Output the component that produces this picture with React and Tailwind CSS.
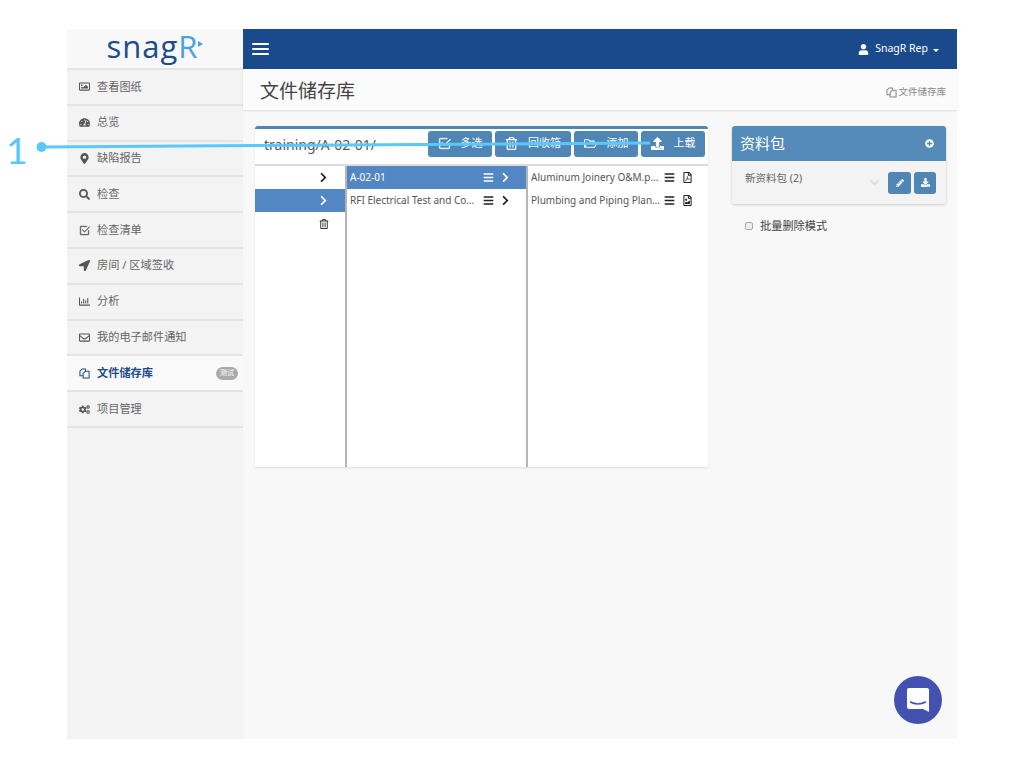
import {
  FaRegImage, FaTachometerAlt, FaMapMarkerAlt, FaSearch, FaLocationArrow,
  FaRegChartBar, FaRegEnvelope, FaCogs, FaBars, FaUser, FaChevronRight, FaRegTrashAlt,
  FaRegFolderOpen, FaUpload, FaPlusCircle, FaPencilAlt, FaDownload, FaRegFilePdf, FaRegFileImage, FaChevronDown,
} from "react-icons/fa";
import { BsCheck2Square } from "react-icons/bs";

const font = { fontFamily: '"Noto Sans", "Noto Sans CJK SC", sans-serif' };

function FilesIcon({ className }) {
  return (
    <svg viewBox="0 0 12 12" width="11" height="11" fill="none" stroke="currentColor" strokeWidth="1.100" className={className}>
      <path d="M4.500 8.500H1V3.500L3.500 1H7v2.500" />
      <path d="M4.500 11V6L7 3.500h4V11z" />
    </svg>
  );
}

function CheckIcon({ className }) {
  return <BsCheck2Square className={`stroke-current stroke-[0.6] ${className}`} />;
}

const navItems = [
  { label: "查看图纸", icon: FaRegImage },
  { label: "总览", icon: FaTachometerAlt },
  { label: "缺陷报告", icon: FaMapMarkerAlt },
  { label: "检查", icon: FaSearch },
  { label: "检查清单", icon: CheckIcon },
  { label: "房间 / 区域签收", icon: FaLocationArrow },
  { label: "分析", icon: FaRegChartBar },
  { label: "我的电子邮件通知", icon: FaRegEnvelope },
  { label: "文件储存库", icon: FilesIcon, active: true },
  { label: "项目管理", icon: FaCogs },
];

const toolbar = [
  { label: "多选", icon: CheckIcon, w: "w-[64px]" },
  { label: "回收箱", icon: FaRegTrashAlt, w: "w-[76px]" },
  { label: "添加", icon: FaRegFolderOpen, w: "w-[64px]" },
  { label: "上载", icon: FaUpload, w: "w-[64px]" },
];

function Sidebar() {
  return (
    <div className="w-[176px] shrink-0 bg-[#f3f3f3] flex flex-col">
      <div className="h-[41px] bg-[#f8f8f8] border-b-2 border-[#e4e4e4] flex items-center justify-center">
        <span className="text-[31px] leading-none tracking-[1px] text-[#1c4b8c] -mt-[5px]" style={{ fontFamily: '"Open Sans", sans-serif' }}>
          snag<span className="text-[#4aa3df]">R</span>
        </span>
        <svg width="5" height="6" viewBox="0 0 5 6" className="-mt-[10px]"><path d="M0 0l5 3-5 3z" fill="#4aa3df" /></svg>
      </div>
      {navItems.map((item) => {
        const Icon = item.icon;
        return (
          <div
            key={item.label}
            className={`h-[35.8px] border-b-2 border-[#e4e4e4] flex items-center pl-[12px] pr-[5px] text-[11.2px] ${item.active ? "bg-[#f9f9f9] text-[#1c4b8c] font-semibold" : "text-[#666]"}`}
          >
            <span className="w-[18px] flex justify-start"><Icon className={`text-[11px] ${item.active ? "text-[#1c4b8c]" : "text-[#555]"}`} /></span>
            <span>{item.label}</span>
            {item.active && (
              <span className="ml-auto h-[13px] w-[22px] rounded-full bg-[#aaa] text-white text-[7px] font-normal flex items-center justify-center">测试</span>
            )}
          </div>
        );
      })}
    </div>
  );
}

function Toolbar() {
  return (
    <div className="h-[37px] border-b-2 border-[#dcdcdc] flex items-center justify-between pl-[9px] pr-[3px]">
      <span className="text-[14px] text-[#555] -mt-[4px]">training/A-02-01/</span>
      <div className="flex gap-[3px] -mt-[6px]">
        {toolbar.map((b) => {
          const Icon = b.icon;
          return (
            <button key={b.label} className={`${b.w} h-[26px] rounded-[3px] bg-[#4f86b5] text-white text-[11px] flex items-center justify-center gap-[10px]`}>
              <Icon className="text-[13px]" />
              {b.label}
            </button>
          );
        })}
      </div>
    </div>
  );
}

function Row({ name, selected, chevron, fileIcon: FileIcon }) {
  return (
    <div className={`h-[23px] flex items-center pl-[3px] pr-[8px] text-[10px] ${selected ? "bg-[#5387c4] text-white" : "text-[#555]"}`}>
      <span className="flex-1 truncate">{name}</span>
      <FaBars className={`text-[11px] ml-[4px] ${selected ? "text-white" : "text-[#222]"}`} />
      {chevron && <FaChevronRight className={`text-[11px] ml-[6px] mr-[7px] ${selected ? "text-white" : "text-[#222]"}`} />}
      {FileIcon && <FileIcon className="text-[11px] ml-[7px] mr-[7px] text-[#222]" />}
    </div>
  );
}

function FileBrowser() {
  return (
    <div className="w-[453px] h-[341px] bg-white border-t-[3px] border-[#4f86b5] rounded-t-[3px] shadow-[0_1px_2px_rgba(0,0,0,0.1)] flex flex-col">
      <Toolbar />
      <div className="flex-1 flex">
        <div className="w-[90px] shrink-0">
          <div className="h-[23px] flex items-center justify-end pr-[16px]"><FaChevronRight className="text-[11px] text-[#222]" /></div>
          <div className="h-[23px] bg-[#5387c4] flex items-center justify-end pr-[16px]"><FaChevronRight className="text-[11px] text-white" /></div>
          <div className="h-[23px] flex items-center justify-end pr-[16px]"><FaRegTrashAlt className="text-[10px] text-[#333]" /></div>
        </div>
        <div className="w-[183px] shrink-0 border-x-2 border-[#b5b5b5]">
          <Row name="A-02-01" selected chevron />
          <Row name="RFI Electrical Test and Commissioning" chevron />
        </div>
        <div className="flex-1 min-w-0">
          <Row name="Aluminum Joinery O&M.pdf" fileIcon={FaRegFilePdf} />
          <Row name="Plumbing and Piping Plan.png" fileIcon={FaRegFileImage} />
        </div>
      </div>
    </div>
  );
}

function Packages() {
  return (
    <div className="w-[214px] ml-[24px]">
      <div className="h-[78px] rounded-[3px] shadow-[0_1px_3px_rgba(0,0,0,0.18)] overflow-hidden">
        <div className="h-[35px] bg-[#548bb9] text-white flex items-center justify-between pl-[8px] pr-[12px]">
          <span className="text-[15px]">资料包</span>
          <FaPlusCircle className="text-[9px]" />
        </div>
        <div className="h-[43px] bg-[#f3f3f3] flex items-center pl-[13px] pr-[10px] text-[10.5px] text-[#666]">
          <span className="flex-1 -mt-[8px]">新资料包 (2)</span>
          <FaChevronDown className="text-[11px] text-[#ddd] mr-[8px]" />
          <button className="w-[23px] h-[22px] rounded-[3px] bg-[#4f86b5] text-white flex items-center justify-center"><FaPencilAlt className="text-[8px]" /></button>
          <button className="w-[22px] h-[22px] ml-[3px] rounded-[3px] bg-[#4f86b5] text-white flex items-center justify-center"><FaDownload className="text-[9px]" /></button>
        </div>
      </div>
      <label className="flex items-center mt-[14px] pl-[13px] text-[11.2px] text-[#444]">
        <span className="w-[8px] h-[8px] rounded-[2px] border border-[#aaa] bg-[#eee] mr-[7px]" />
        批量删除模式
      </label>
    </div>
  );
}

export default function App() {
  return (
    <div className="relative w-[1024px] h-[768px] bg-white overflow-hidden pt-[29px] pl-[67px]" style={font}>
      <div className="w-[890px] h-[710px] flex">
        <Sidebar />
        <div className="flex-1 flex flex-col bg-[#f8f8f8]">
          <div className="h-[40px] bg-[#1b4a8c] flex items-center justify-between pl-[9px] pr-[18px] text-white">
            <svg width="17" height="12" viewBox="0 0 17 12" fill="#fff">
              <rect width="17" height="2" rx="1" />
              <rect y="5" width="17" height="2" rx="1" />
              <rect y="10" width="17" height="2" rx="1" />
            </svg>
            <div className="flex items-center text-[10.5px]">
              <FaUser className="text-[11px] mr-[6px]" />
              SnagR Rep
              <span className="ml-[5px] mt-[2px] border-x-[3px] border-x-transparent border-t-[3px] border-t-white" />
            </div>
          </div>
          <div className="h-[41px] bg-[#fbfbfb] shadow-[0_1px_2px_rgba(0,0,0,0.1)] flex items-center justify-between pl-[17px] pr-[11px]">
            <span className="text-[19px] text-[#444] mt-[3px]">文件储存库</span>
            <span className="flex items-center gap-[1px] text-[9.5px] text-[#888] mt-[6px]"><FilesIcon />文件储存库</span>
          </div>
          <div className="flex pt-[16px] pl-[12px]">
            <FileBrowser />
            <Packages />
          </div>
        </div>
      </div>

      {/* callout */}
      <span className="absolute left-[6px] top-[127px] text-[37px] leading-[46px] text-[#5ac8fa]" style={{ fontFamily: 'Lato, sans-serif' }}>1</span>
      <svg className="absolute left-0 top-0 pointer-events-none" width="1024" height="768">
        <circle cx="41.5" cy="147" r="5" fill="#5ac8fa" />
        <line x1="42" y1="147" x2="650" y2="143" stroke="#5ac8fa" strokeWidth="3" />
      </svg>

      {/* chat launcher */}
      <div className="absolute left-[894px] top-[676px] w-[48px] h-[48px] rounded-full bg-[#4351b0] flex items-center justify-center">
        <svg width="24" height="26" viewBox="0 0 24 26">
          <path d="M3 1h18a2 2 0 0 1 2 2v22l-6-3H3a2 2 0 0 1-2-2V3a2 2 0 0 1 2-2z" fill="#fff" />
          <path d="M4.500 15c4 2.600 11 2.600 15 0" stroke="#4351b0" strokeWidth="1.500" fill="none" strokeLinecap="round" />
        </svg>
      </div>
    </div>
  );
}
